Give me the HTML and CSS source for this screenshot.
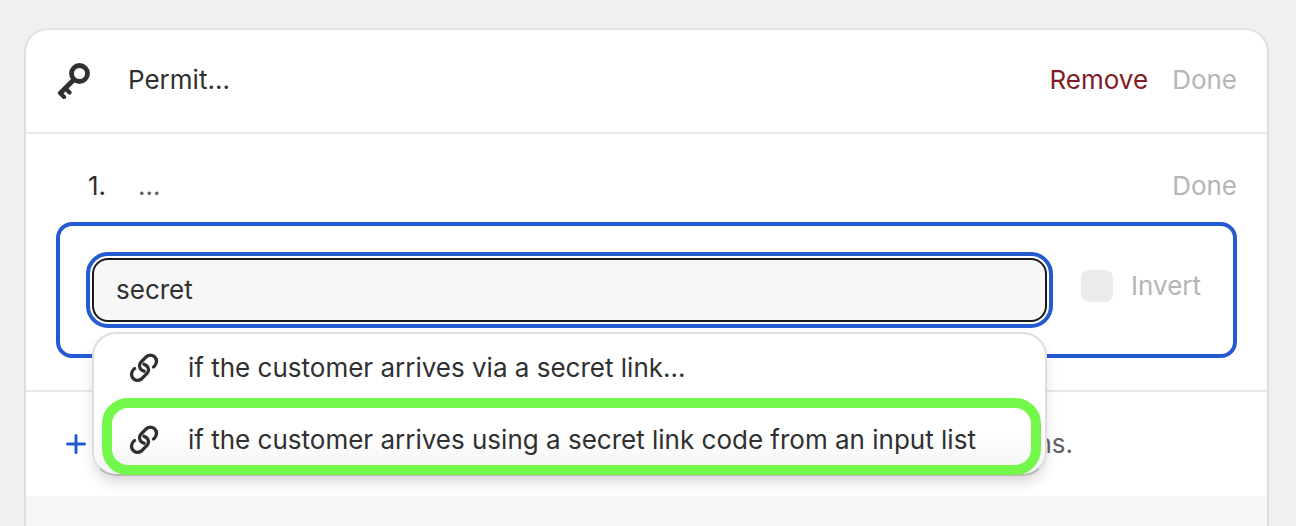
FILE: index.html
```html
<!DOCTYPE html>
<html lang="en">
<head>
<meta charset="utf-8">
<title>Permit</title>
<link rel="stylesheet" href="styles.css">
</head>
<body>
<main class="card">
  <header class="card-header">
    <svg class="key-icon" viewBox="0 0 36 38" aria-hidden="true">
      <g fill="none" stroke="currentColor">
        <circle cx="23.500" cy="12.500" r="8" stroke-width="4.800"/>
        <path d="M18.500 18 4.500 32" stroke-width="5"/>
        <path d="M4 32 8 36M9.500 27.500l4 4" stroke-width="4.200" stroke-linecap="round"/>
      </g>
    </svg>
    <h1 class="title">Permit...</h1>
    <button class="action danger" type="button">Remove</button>
    <button class="action" type="button" disabled>Done</button>
  </header>

  <section class="rule">
    <div class="rule-head">
      <span class="number">1.</span>
      <span class="summary">...</span>
      <button class="action" type="button" disabled>Done</button>
    </div>
    <div class="condition">
      <div class="combo">
        <input class="search" type="text" value="secret" aria-label="Condition">
        <div class="menu">
          <button class="option" type="button">
            <svg class="link-icon" viewBox="0 0 30 30" aria-hidden="true"><g fill="none" stroke="currentColor" stroke-width="3.300" stroke-linecap="round"><path d="M24.500 14Q26 13 27 10.500C29 4.500 23 0 17.500 3.500L12 9C9 12.500 11 17 15 18.200"/><path d="M5.500 15.500Q4 16.500 3 19C1 25 7 29.500 12.500 26L18 20.500C21 17 19 12.500 15 11.300"/></g></svg>
            <span>if the customer arrives via a secret link...</span>
          </button>
          <button class="option marked" type="button">
            <svg class="link-icon" viewBox="0 0 30 30" aria-hidden="true"><g fill="none" stroke="currentColor" stroke-width="3.300" stroke-linecap="round"><path d="M24.500 14Q26 13 27 10.500C29 4.500 23 0 17.500 3.500L12 9C9 12.500 11 17 15 18.200"/><path d="M5.500 15.500Q4 16.500 3 19C1 25 7 29.500 12.500 26L18 20.500C21 17 19 12.500 15 11.300"/></g></svg>
            <span>if the customer arrives using a secret link code from an input list</span>
          </button>
        </div>
      </div>
      <label class="invert"><input class="check" type="checkbox" disabled>Invert</label>
    </div>
  </section>

  <footer class="card-footer">
    <button class="add" type="button" aria-label="Add">
      <svg class="plus-icon" viewBox="0 0 20 20" aria-hidden="true"><path d="M10 1.500v17M1.500 10h17" stroke="currentColor" stroke-width="3" stroke-linecap="round"/></svg>
    </button>
    <span class="hint">ns.</span>
  </footer>
  <div class="below"></div>
</main>
</body>
</html>
```
FILE: styles.css
```css
* { box-sizing: border-box; }

body {
  margin: 0;
  min-height: 100vh;
  padding: 28px 27px 0 24px;
  display: flex;
  flex-direction: column;
  background: #f0f0f0;
  color: #303030;
  font: 425 26px/32px Inter, "Liberation Sans", sans-serif;
}

button, input { font: inherit; color: inherit; }

button {
  padding: 0;
  border: 0;
  background: none;
}

.card {
  flex: 1;
  display: flex;
  flex-direction: column;
  border: 2px solid #dedede;
  border-top-color: #e3e3e3;
  border-bottom: 0;
  border-radius: 24px 24px 0 0;
  background: #fff;
}

.card-header {
  display: flex;
  align-items: center;
  height: 104px;
  padding: 0 30px 2px;
  border-bottom: 2px solid #e8e8e8;
}

.key-icon {
  width: 36px;
  height: 38px;
  margin-right: 36px;
}

.title {
  flex: 1;
  margin: 0;
  font: inherit;
}

.action { color: #303030; }
.action:disabled { color: #b5b5b5; }
.danger { margin-right: 24px; color: #821b25; }

.rule {
  padding: 36px 30px 32px;
  border-bottom: 2px solid #e8e8e8;
}

.rule-head {
  display: flex;
  align-items: center;
  margin-bottom: 20px;
  padding-left: 32px;
}

.number { width: 50px; }
.summary { flex: 1; color: #616161; }

.condition {
  display: flex;
  align-items: flex-start;
  gap: 34px;
  padding: 32px;
  border: 4px solid #245bd0;
  border-radius: 16px;
}

.combo {
  position: relative;
  flex: 1;
}

.search {
  display: block;
  width: 100%;
  height: 64px;
  padding: 0 22px 2px;
  border: 2px solid #1a1a1a;
  border-radius: 16px;
  background: #f7f7f7;
  outline: 4px solid #245bd0;
  outline-offset: 2px;
}

.menu {
  position: absolute;
  z-index: 1;
  top: calc(100% + 10px);
  left: 0;
  right: 0;
  display: grid;
  gap: 4px;
  border: 2px solid #dedede;
  border-bottom-color: #b8b8b8;
  border-radius: 24px;
  background: linear-gradient(#fff 70%, #f3f3f3);
  box-shadow: 0 8px 16px -4px rgba(0, 0, 0, 0.2);
}

.option {
  display: flex;
  align-items: center;
  width: 100%;
  height: 68px;
  padding-left: 35px;
  text-align: left;
}

.link-icon {
  width: 30px;
  height: 30px;
  margin-right: 29px;
}

.marked { position: relative; }

.marked::after {
  content: "";
  position: absolute;
  inset: -8px 4px -1px 8px;
  border: 10px solid #73f74a;
  border-radius: 26px;
}

.invert {
  display: flex;
  align-items: center;
  gap: 18px;
  padding-top: 12px;
  color: #b5b5b5;
}

.check {
  appearance: none;
  width: 32px;
  height: 32px;
  margin: 0;
  border-radius: 8px;
  background: #ebebeb;
}

.card-footer {
  display: flex;
  align-items: center;
  justify-content: space-between;
  height: 104px;
  padding: 0 194px 0 40px;
}

.add { color: #245bd0; }

.plus-icon {
  display: block;
  width: 20px;
  height: 20px;
}

.hint { color: #616161; }

.below {
  flex: 1;
  background: #f7f7f7;
}
```
